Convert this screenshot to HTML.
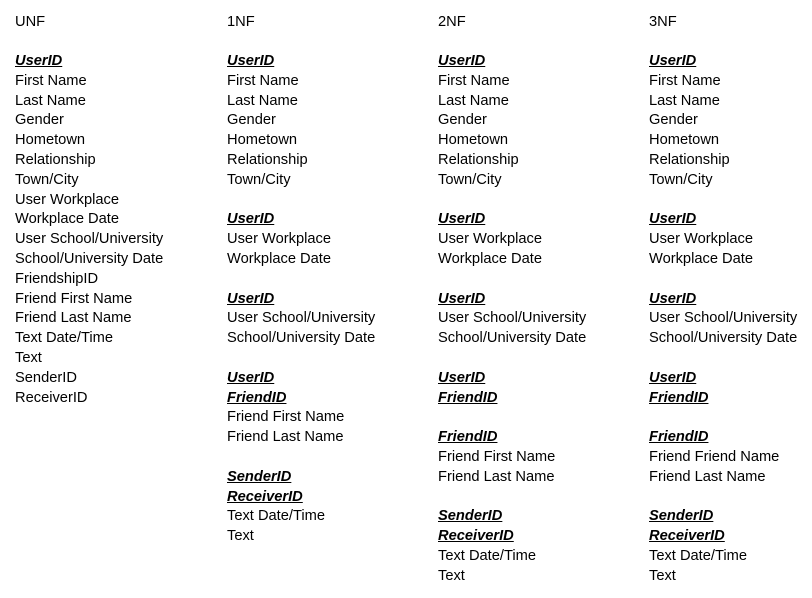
<!DOCTYPE html>
<html><head><meta charset="utf-8"><style>
html,body{margin:0;padding:0;background:#fff;width:812px;height:598px;overflow:hidden}
.c{position:absolute;top:12.5px;font-family:"Liberation Sans",Arial,sans-serif;font-size:14.67px;line-height:19.8px;color:#000;white-space:nowrap}
.c div{height:19.8px}
b{font-style:italic;text-decoration:underline;font-weight:bold}
</style></head><body>
<div class="c" style="left:15px">
<div>UNF</div><div></div>
<div><b>UserID</b></div><div>First Name</div><div>Last Name</div><div>Gender</div><div>Hometown</div><div>Relationship</div><div>Town/City</div><div>User Workplace</div><div>Workplace Date</div><div>User School/University</div><div>School/University Date</div><div>FriendshipID</div><div>Friend First Name</div><div>Friend Last Name</div><div>Text Date/Time</div><div>Text</div><div>SenderID</div><div>ReceiverID</div>
</div>
<div class="c" style="left:227px">
<div>1NF</div><div></div>
<div><b>UserID</b></div><div>First Name</div><div>Last Name</div><div>Gender</div><div>Hometown</div><div>Relationship</div><div>Town/City</div><div></div>
<div><b>UserID</b></div><div>User Workplace</div><div>Workplace Date</div><div></div>
<div><b>UserID</b></div><div>User School/University</div><div>School/University Date</div><div></div>
<div><b>UserID</b></div><div><b>FriendID</b></div><div>Friend First Name</div><div>Friend Last Name</div><div></div>
<div><b>SenderID</b></div><div><b>ReceiverID</b></div><div>Text Date/Time</div><div>Text</div>
</div>
<div class="c" style="left:438px">
<div>2NF</div><div></div>
<div><b>UserID</b></div><div>First Name</div><div>Last Name</div><div>Gender</div><div>Hometown</div><div>Relationship</div><div>Town/City</div><div></div>
<div><b>UserID</b></div><div>User Workplace</div><div>Workplace Date</div><div></div>
<div><b>UserID</b></div><div>User School/University</div><div>School/University Date</div><div></div>
<div><b>UserID</b></div><div><b>FriendID</b></div><div></div>
<div><b>FriendID</b></div><div>Friend First Name</div><div>Friend Last Name</div><div></div>
<div><b>SenderID</b></div><div><b>ReceiverID</b></div><div>Text Date/Time</div><div>Text</div>
</div>
<div class="c" style="left:649px">
<div>3NF</div><div></div>
<div><b>UserID</b></div><div>First Name</div><div>Last Name</div><div>Gender</div><div>Hometown</div><div>Relationship</div><div>Town/City</div><div></div>
<div><b>UserID</b></div><div>User Workplace</div><div>Workplace Date</div><div></div>
<div><b>UserID</b></div><div>User School/University</div><div>School/University Date</div><div></div>
<div><b>UserID</b></div><div><b>FriendID</b></div><div></div>
<div><b>FriendID</b></div><div>Friend Friend Name</div><div>Friend Last Name</div><div></div>
<div><b>SenderID</b></div><div><b>ReceiverID</b></div><div>Text Date/Time</div><div>Text</div>
</div>
</body></html>
